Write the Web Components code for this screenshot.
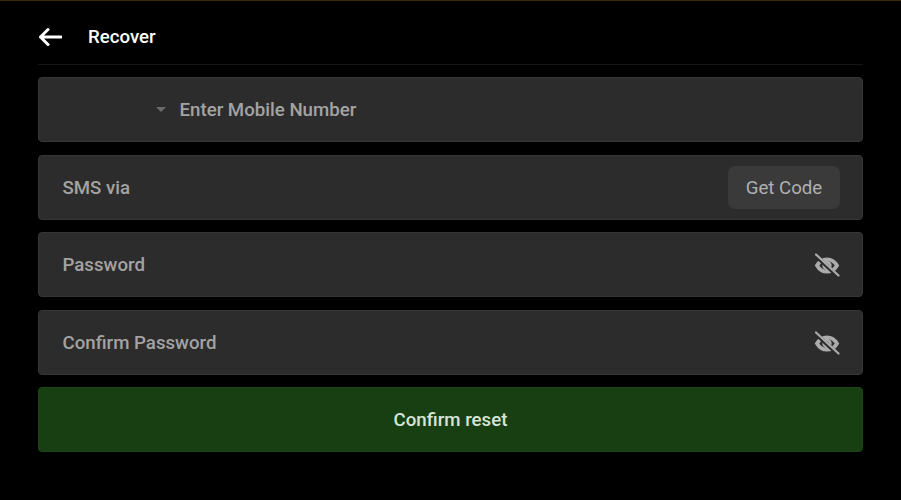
<!DOCTYPE html>
<html><head><meta charset="utf-8"><style>
html,body{margin:0;padding:0;background:#000;height:100%;overflow:hidden}
body{font-family:Roboto,"Liberation Sans",sans-serif}
.off{margin-top:1px}
</style></head><body>
<recover-page>
<recover-header>Recover</recover-header>
<form-field><span slot="prefix"></span>Enter Mobile Number</form-field>
<form-field class="off">SMS via<code-button slot="end">Get Code</code-button></form-field>
<form-field>Password<eye-off slot="end"></eye-off></form-field>
<form-field class="off">Confirm Password<eye-off slot="end"></eye-off></form-field>
<confirm-button>Confirm reset</confirm-button>
</recover-page>
<script>
function def(name,html){customElements.define(name,class extends HTMLElement{constructor(){super();this.attachShadow({mode:'open'}).innerHTML=html}})}
def('recover-page',`<style>:host{display:flex;flex-direction:column;gap:12px;box-sizing:border-box;height:500px;padding:0 38px;border-top:1px solid #3a2c05}</style><slot></slot>`);
def('recover-header',`<style>:host{display:flex;align-items:center;box-sizing:border-box;height:64px;padding-top:8px;border-bottom:1px solid #161616;color:#fff;font-size:18.670px;font-weight:500;gap:26px}
svg{width:24px;height:20px;display:block}</style>
<svg viewBox="0 0 24 20" fill="none" stroke="#fff" stroke-width="3" stroke-linecap="round" stroke-linejoin="round"><path d="M23 10H2.500M10 2.500 2.500 10l7.500 7.500"/></svg><span><slot></slot></span>`);
def('form-field',`<style>:host{display:flex;align-items:center;box-sizing:border-box;height:65px;padding:0 22px 0 23.500px;background:#2c2c2c;border:1px solid #363636;border-radius:4px;color:#a3a3a3;font-size:18.670px;font-weight:500}
.t{flex:1;min-width:0}::slotted([slot=prefix]){display:block;width:0;height:0;margin-left:93px;margin-right:14px;border-left:5px solid transparent;border-right:5px solid transparent;border-top:5px solid #6b6b6b}</style>
<slot name="prefix"></slot><span class="t"><slot></slot></span><slot name="end"></slot>`);
def('code-button',`<style>:host{display:flex;align-items:center;justify-content:center;box-sizing:border-box;width:112px;height:43px;border-radius:7px;background:#3a3a3a;color:#b0b0b0;font-size:18.670px;font-weight:400}</style><slot></slot>`);
def('eye-off',`<style>:host{display:block;width:26px;height:24px}svg{display:block;width:26px;height:24px}</style>
<svg viewBox="0 0 26 24" fill="none"><path stroke="#ababab" stroke-width="3.800" d="M3 12.500C5.500 8.300 9 6.300 13 6.300s7.500 2 10 6.200C20.500 16.700 17 18.700 13 18.700S5.500 16.700 3 12.500Z"/><circle cx="13" cy="12.500" r="3.200" stroke="#ababab" stroke-width="3"/><path d="M3 4 23 22.500" stroke="#2c2c2c" stroke-width="3.800"/><path d="M2 1.500 24.500 22.500" stroke="#ababab" stroke-width="2.200" stroke-linecap="round"/></svg>`);
def('confirm-button',`<style>:host{display:flex;align-items:center;justify-content:center;box-sizing:border-box;height:65px;background:#173f12;border:1px solid #1d4617;border-radius:4px;color:#d9e3d6;font-size:18.670px;font-weight:500}</style><slot></slot>`);
</script>
</body></html>
